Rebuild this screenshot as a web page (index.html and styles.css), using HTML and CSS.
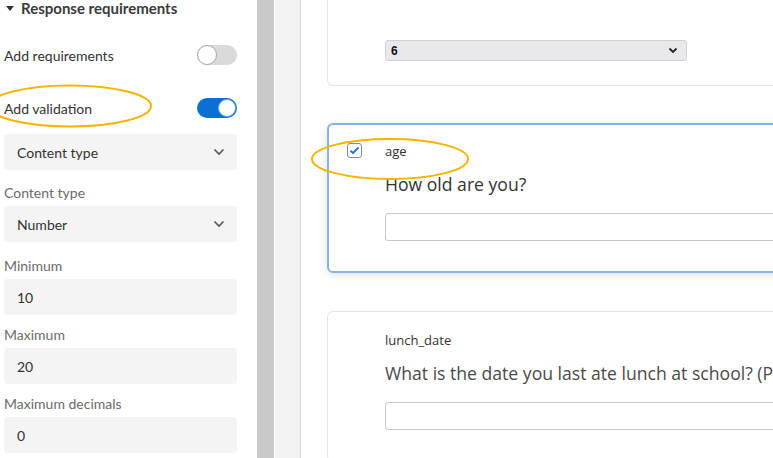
FILE: index.html
```html
<!DOCTYPE html>
<html>
<head>
<meta charset="utf-8">
<link rel="stylesheet" href="styles.css">
</head>
<body>
<div class="app">
  <aside class="sidebar">
    <div class="section-title">
      <span class="caret"></span>
      <span>Response requirements</span>
    </div>
    <div class="toggle-row first">
      <span>Add requirements</span>
      <span class="toggle off"><span class="knob"></span></span>
    </div>
    <div class="toggle-row">
      <span>Add validation</span>
      <span class="toggle on"><span class="knob"></span></span>
    </div>
    <div class="field select">
      <span>Content type</span>
      <svg class="chev" width="12" height="8" viewBox="0 0 12 8"><path d="M1.5 1.5 L6 6 L10.5 1.5" fill="none" stroke="#555" stroke-width="1.6"/></svg>
    </div>
    <div class="label">Content type</div>
    <div class="field select">
      <span>Number</span>
      <svg class="chev" width="12" height="8" viewBox="0 0 12 8"><path d="M1.5 1.5 L6 6 L10.5 1.5" fill="none" stroke="#555" stroke-width="1.6"/></svg>
    </div>
    <div class="label tall">Minimum</div>
    <div class="field">10</div>
    <div class="label short">Maximum</div>
    <div class="field">20</div>
    <div class="label short">Maximum decimals</div>
    <div class="field">0</div>
    <svg class="ring ring-a" width="170" height="46" viewBox="0 0 170 46"><ellipse cx="84" cy="23" rx="81" ry="20.5" fill="none" stroke="#f5b400" stroke-width="2"/></svg>
  </aside>
  <div class="gutter"></div>
  <div class="strip"></div>
  <main class="canvas">
    <section class="card card-top">
      <div class="qselect">
        <span>6</span>
        <svg width="10" height="7" viewBox="0 0 10 7"><path d="M1.5 1.5 L5 5 L8.5 1.5" fill="none" stroke="#222" stroke-width="1.8"/></svg>
      </div>
    </section>
    <section class="card active">
      <div class="qhead">
        <span class="check"><svg width="11" height="9" viewBox="0 0 11 9"><path d="M1.5 4.8 L4 7 L9.5 1.5" fill="none" stroke="#1a6fd6" stroke-width="1.8"/></svg></span>
        <span class="qid">age</span>
      </div>
      <div class="qtext">How old are you?</div>
      <div class="qinput"></div>
      <svg class="ring ring-b" width="162" height="46" viewBox="0 0 162 46"><ellipse cx="81" cy="23" rx="78" ry="20" fill="none" stroke="#f5b400" stroke-width="2"/></svg>
    </section>
    <section class="card last">
      <div class="qhead">
        <span class="qid">lunch_date</span>
      </div>
      <div class="qtext light">What is the date you last ate lunch at school? (Please use MM/DD/YYYY)</div>
      <div class="qinput"></div>
    </section>
  </main>
</div>
</body>
</html>
```
FILE: styles.css
```css
* { box-sizing: border-box; }
html, body { margin: 0; padding: 0; background: #fff; }
body { width: 773px; height: 458px; overflow: hidden; font-family: "Lato", "Open Sans", sans-serif; color: #333; }
.app { display: flex; height: 458px; }

.sidebar { position: relative; width: 257px; flex: none; padding: 0 20px 0 4px; }
.section-title { display: flex; align-items: center; gap: 7px; height: 16px; font-size: 15px; font-weight: 700; color: #3a3a3a; }
.caret { width: 0; height: 0; border-left: 4px solid transparent; border-right: 4px solid transparent; border-top: 5px solid #333; margin-left: 2px; }
.toggle-row { display: flex; align-items: center; justify-content: space-between; height: 20px; font-size: 14px; color: #333; margin-top: 33px; }
.toggle-row.first { margin-top: 29px; }
.toggle { width: 40px; height: 20px; border-radius: 10px; position: relative; display: block; }
.toggle.off { background: #dadada; }
.toggle.on { background: #0b6fd4; }
.knob { position: absolute; top: 0; width: 20px; height: 20px; border-radius: 50%; background: #fff; }
.toggle.off .knob { left: 0; border: 1.5px solid #a8a8a8; }
.toggle.on .knob { right: 1px; top: 1px; width: 18px; height: 18px; border: 1px solid #6aa4e6; }

.field { height: 36px; background: #f4f4f4; border-radius: 4px; display: flex; align-items: center; justify-content: space-between; padding: 0 12px 0 13px; font-size: 14px; color: #333; }
.toggle-row + .field { margin-top: 16px; }
.label { font-size: 14px; color: #6b6b6b; line-height: 20px; padding: 13px 0 3px; }
.label.tall { padding-top: 14px; }
.label.short { padding-top: 10px; }
.chev { display: block; }

.ring { position: absolute; pointer-events: none; }
.ring-a { left: -14px; top: 83px; }
.ring-b { left: -20px; top: 11px; }

.gutter { width: 17px; flex: none; background: #c9c9c9; border-right: 1px solid #fff; box-sizing: content-box; }
.strip { width: 25px; flex: none; background: #f3f3f3; border-right: 1px solid #d9d9d9; box-sizing: content-box; }

.canvas { flex: 1; overflow: hidden; padding-left: 26px; display: flex; flex-direction: column; gap: 37px; font-family: "Open Sans", "Noto Sans", sans-serif; }
.card { position: relative; width: 600px; border: 1px solid #e4e4e4; border-radius: 6px; background: #fff; padding: 19px 0 31px 57px; flex: none; }
.card-top { margin-top: -40px; padding-top: 80px; padding-bottom: 24px; border-top: none; }
.card.active { border: 2px solid #86b3e8; box-shadow: 0 2px 8px rgba(0,0,0,0.12); padding: 17px 0 30px 56px; }
.card.last { margin-top: 1px; }

.qselect { width: 302px; height: 21px; background: #e9e9ed; border: 1px solid #cfcfd4; border-radius: 3px; display: flex; align-items: center; justify-content: space-between; padding: 0 8px 0 5px; font-size: 12px; font-weight: 700; color: #111; font-family: "Liberation Sans", Arial, sans-serif; }

.qhead { position: relative; height: 18px; display: flex; align-items: center; }
.check { position: absolute; left: -38px; top: 1px; width: 15px; height: 15px; border: 1.5px solid #7f8b99; border-radius: 3px; display: flex; align-items: center; justify-content: center; }
.qid { font-size: 13px; color: #333; }
.qtext { margin-top: 12px; font-size: 17.6px; line-height: 24px; color: #333; white-space: nowrap; }
.qtext.light { color: #4a4a4a; }
.qinput { margin-top: 17px; height: 28px; border: 1px solid #c8c8c8; border-radius: 3px; background: #fff; }
```
